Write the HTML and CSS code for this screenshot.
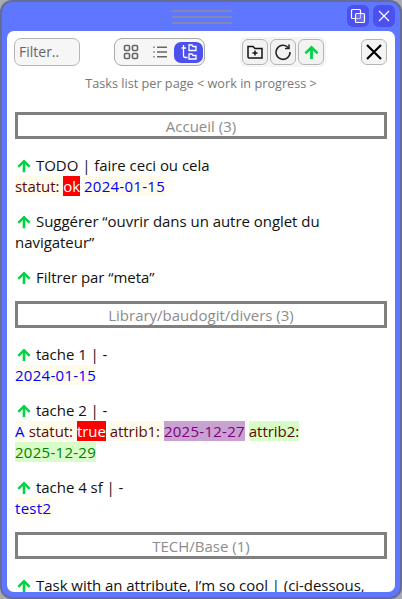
FILE: index.html
```html
<!DOCTYPE html>
<html lang="fr">
<head>
<meta charset="utf-8">
<title>Tasks</title>
<link rel="stylesheet" href="styles.css">
</head>
<body>
<div class="window">
  <header class="titlebar">
    <div class="grip"><i></i><i></i><i></i></div>
    <div class="winbtns">
      <button class="winbtn"><svg width="18" height="18" viewBox="0 0 18 18" fill="none" stroke="#fff" stroke-width="1.200"><rect x="2.500" y="2.500" width="9" height="9" rx="1"/><rect x="6.500" y="6.500" width="9" height="9" rx="1" fill="#8a86f5" fill-opacity=".5"/></svg></button>
      <button class="winbtn"><svg width="12" height="12" viewBox="0 0 12 12" fill="none" stroke="#fff" stroke-width="1.200"><path d="M1 1 11 11M11 1 1 11"/></svg></button>
    </div>
  </header>
  <main class="panel">
    <div class="toolbar">
      <div class="filter">Filter..</div>
      <div class="views">
        <button class="view"><svg width="16" height="16" viewBox="0 0 16 16" fill="none" stroke="#666" stroke-width="1.600"><rect x="1.500" y="1.500" width="5" height="5" rx="1"/><rect x="9.500" y="1.500" width="5" height="5" rx="1"/><rect x="1.500" y="9.500" width="5" height="5" rx="1"/><rect x="9.500" y="9.500" width="5" height="5" rx="1"/></svg></button>
        <button class="view"><svg width="16" height="16" viewBox="0 0 16 16" fill="none" stroke="#666" stroke-width="1.500"><path d="M5 3.200H15M5 8H15M5 12.800H15"/><path d="M1 3.200H3M1 8H3M1 12.800H3" stroke="#999"/></svg></button>
        <button class="view active"><svg width="18" height="18" viewBox="0 0 18 18" fill="none" stroke="#fff" stroke-width="1.300"><path d="M1.500 5H6M3.500 2V12.500Q3.500 14.500 5.500 14.500H7.500"/><path d="M9 2H12L13 3.500H16V7.500H9ZM9 11H12L13 12.500H16V16H9Z"/></svg></button>
      </div>
      <div class="actions">
        <button class="action"><svg width="18" height="18" viewBox="0 0 18 18" fill="none" stroke="#111" stroke-width="1.500"><path d="M2 14V3.500H7L9 5.500H16V15H3Q2 15 2 14Z"/><path d="M9 7.500V12.500M6.500 10H11.500"/></svg></button>
        <button class="action"><svg width="18" height="18" viewBox="0 0 18 18" fill="none" stroke="#222" stroke-width="1.500"><path d="M14.500 5A7 7 0 1 0 16 9"/><path d="M15 1.500V5.500H11"/></svg></button>
        <button class="action"><svg class="arrow-big" viewBox="0 0 16 16"><use href="#up"/></svg></button>
      </div>
      <button class="close"><svg width="18" height="18" viewBox="0 0 18 18" fill="none" stroke="#000" stroke-width="2.200"><path d="M2 2 16 16M16 2 2 16"/></svg></button>
    </div>
    <p class="subtitle">Tasks list per page &lt; work in progress &gt;</p>

    <section class="group">
      <h2 class="group-title">Accueil (3)</h2>
      <div class="task">
        <div><svg class="arrow" viewBox="0 0 16 16"><use href="#up"/></svg>TODO | faire ceci ou cela</div>
        <div><span class="attr">statut: </span><span class="red">ok</span> <span class="attr val">2024-01-15</span></div>
      </div>
      <div class="task"><svg class="arrow" viewBox="0 0 16 16"><use href="#up"/></svg>Suggérer “ouvrir dans un autre onglet du navigateur”</div>
      <div class="task"><svg class="arrow" viewBox="0 0 16 16"><use href="#up"/></svg>Filtrer par “meta”</div>
    </section>

    <section class="group">
      <h2 class="group-title">Library/baudogit/divers (3)</h2>
      <div class="task">
        <div><svg class="arrow" viewBox="0 0 16 16"><use href="#up"/></svg>tache 1 | -</div>
        <div><span class="attr val">2024-01-15</span></div>
      </div>
      <div class="task">
        <div><svg class="arrow" viewBox="0 0 16 16"><use href="#up"/></svg>tache 2 | -</div>
        <div><span class="attr val">A</span> <span class="attr">statut: </span><span class="red">true</span> <span class="attr">attrib1: </span><span class="purple">2025-12-27</span> <span class="green">attrib2: </span><br><span class="green val-green">2025-12-29</span></div>
      </div>
      <div class="task">
        <div><svg class="arrow" viewBox="0 0 16 16"><use href="#up"/></svg>tache 4 sf | -</div>
        <div><span class="attr val">test2</span></div>
      </div>
    </section>

    <section class="group">
      <h2 class="group-title">TECH/Base (1)</h2>
      <div class="task"><svg class="arrow" viewBox="0 0 16 16"><use href="#up"/></svg>Task with an attribute, I’m so cool | (ci-dessous,</div>
    </section>
  </main>
</div>
<svg class="defs" width="0" height="0"><defs><symbol id="up" viewBox="0 0 16 16"><path d="M8 15V4" fill="none" stroke="#00d444" stroke-width="3"/><path d="M1.500 9 8 2.500 14.500 9" fill="none" stroke="#00d444" stroke-width="2.800"/></symbol></defs></svg>
</body>
</html>
```
FILE: styles.css
```css
* { box-sizing: border-box; }
html, body { margin: 0; height: 100%; background: #a9abb2; overflow: hidden; }
body { font-family: "Open Sans", "Noto Sans", sans-serif; }
button { margin: 0; padding: 0; font: inherit; cursor: pointer; }
.defs { position: absolute; }
.window {
  height: 599px; display: flex; flex-direction: column;
  background: #5f77ff; border-radius: 12px;
  border: 2px solid #656c96;
  padding: 0 5px 5px 5px;
}
.titlebar { height: 29px; flex: none; display: flex; align-items: center; justify-content: center; position: relative; }
.grip { width: 60px; display: flex; flex-direction: column; gap: 4px; margin: 1px 0 0 2px; }
.grip i { height: 2px; background: #8088b4; display: block; }
.winbtns { position: absolute; right: 0; top: 3px; display: flex; gap: 4px; }
.winbtn { width: 22px; height: 22px; background: #4b50ee; border: 0; border-radius: 6px; display: flex; align-items: center; justify-content: center; }
.panel { flex: 1; min-height: 0; background: #fff; border-radius: 7px; overflow: hidden; padding: 7px 8px 0 8px; }
.toolbar { display: flex; align-items: flex-start; height: 28px; }
.filter { width: 67px; height: 28px; margin-left: -1px; border: 1px solid #b5b5b5; border-radius: 7px; background: #f6f6f6; color: #666; font-size: 14px; line-height: 25px; padding-left: 4px; }
.views { margin-left: 34px; width: 92px; height: 28px; border: 1px solid #aaa; border-radius: 8px; background: #f6f6f6; display: flex; align-items: center; padding-left: 1px; }
.view { width: 29px; height: 21px; border: 0; background: transparent; border-radius: 7px; display: flex; align-items: center; justify-content: center; }
.view.active { background: #4b50ee; }
.actions { margin-left: 35px; display: flex; gap: 2px; background: #f5f5f5; border-radius: 6px; padding: 2px; height: 30px; margin-top: -1px; }
.action { width: 26px; height: 26px; border: 1px solid #b5b5b5; border-radius: 6px; background: #f2f2f2; display: flex; align-items: center; justify-content: center; }
.arrow-big { width: 15px; height: 15px; }
.close { margin-left: 35px; width: 26px; height: 26px; margin-top: 1px; border: 1px solid #b5b5b5; border-radius: 6px; background: #f4f4f4; display: flex; align-items: center; justify-content: center; }
.subtitle { margin: 9px 0 0; text-align: center; color: #777; font-size: 12.700px; line-height: 17px; }
.group-title { margin: 20px 0 0; height: 27px; border: 3px solid #808080; color: #8c8c8c; font-weight: 400; font-size: 15px; line-height: 23px; text-align: center; }
.group + .group .group-title { margin-top: 13px; }
.task { margin-top: 14px; font-size: 15px; letter-spacing: -.04px; line-height: 21px; color: #111; }
.group-title + .task { margin-top: 16px; }
.arrow { width: 14px; height: 14px; margin-right: 5px; margin-left: 2px; vertical-align: -2px; }
.attr { background: #fffbea; color: #5a0a0a; }
.val { color: #0000ff; letter-spacing: .28px; }
.red { background: #ff0000; color: #fff; }
.purple { background: #c8a2d0; color: #800080; letter-spacing: .28px; }
.green { background: #d8fdc8; color: #5a0a0a; }
.val-green { color: #008000; letter-spacing: .28px; }
```
